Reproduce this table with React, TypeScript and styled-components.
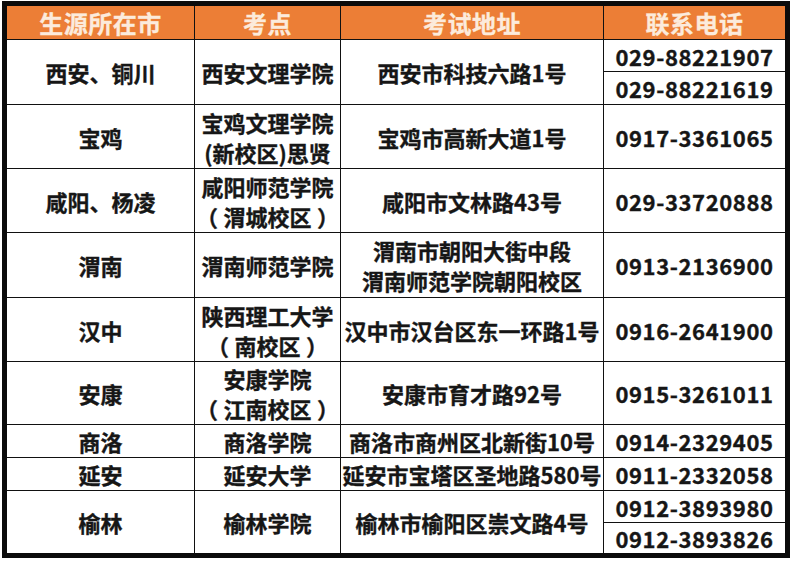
import styled, { createGlobalStyle } from 'styled-components';

const GlobalStyle = createGlobalStyle`
  html, body {
    margin: 0;
    padding: 0;
    background: #ffffff;
  }
  body {
    font-family: "Noto Sans CJK SC", "Noto Sans", sans-serif;
  }
`;

const Page = styled.div`
  width: 796px;
  height: 561px;
  padding: 1px 0 0 2px;
  box-sizing: border-box;
`;

const Table = styled.div`
  display: grid;
  width: 778px;
  grid-template-columns: 187px 145px 262px 181px;
  grid-template-rows: 33px 31px 32px 63px 63px 64px 63px 62px 32px 32px 31px 30px;
  gap: 1px;
  background: #111111;
  border: 5px solid #0b0b0b;
`;

const HeadCell = styled.div`
  display: flex;
  align-items: center;
  justify-content: center;
  background: #ec7e36;
  color: #fcebdc;
  font-size: 24px;
  font-weight: 700;
  letter-spacing: 0.5px;
  -webkit-text-stroke: 0.3px #fcebdc;
`;

const Cell = styled.div<{ $span: number; $phone?: boolean }>`
  grid-row: span ${({ $span }) => $span};
  display: flex;
  flex-direction: column;
  align-items: center;
  justify-content: center;
  background: #ffffff;
  color: #161616;
  font-size: 22px;
  font-weight: 700;
  line-height: 30px;
  white-space: pre;
  -webkit-text-stroke: 0.35px #161616;
  letter-spacing: ${({ $phone }) => ($phone ? '0.6px' : '0')};
`;

interface Site
{
  city: string;
  school: string[];
  address: string[];
  phones: string[];
}

const heads = ['生源所在市', '考点', '考试地址', '联系电话'];

// U+2005 spaces widen the full-width brackets the way the original font sets them
const sites: Site[] = [
  { city: '西安、铜川', school: ['西安文理学院'], address: ['西安市科技六路1号'], phones: ['029-88221907', '029-88221619'] },
  { city: '宝鸡', school: ['宝鸡文理学院', '(新校区)思贤'], address: ['宝鸡市高新大道1号'], phones: ['0917-3361065'] },
  { city: '咸阳、杨凌', school: ['咸阳师范学院', '（\u2005渭城校区\u2005）'], address: ['咸阳市文林路43号'], phones: ['029-33720888'] },
  { city: '渭南', school: ['渭南师范学院'], address: ['渭南市朝阳大街中段', '渭南师范学院朝阳校区'], phones: ['0913-2136900'] },
  { city: '汉中', school: ['陕西理工大学', '（\u2005南校区\u2005）'], address: ['汉中市汉台区东一环路1号'], phones: ['0916-2641900'] },
  { city: '安康', school: ['安康学院', '（\u2005江南校区\u2005）'], address: ['安康市育才路92号'], phones: ['0915-3261011'] },
  { city: '商洛', school: ['商洛学院'], address: ['商洛市商州区北新街10号'], phones: ['0914-2329405'] },
  { city: '延安', school: ['延安大学'], address: ['延安市宝塔区圣地路580号'], phones: ['0911-2332058'] },
  { city: '榆林', school: ['榆林学院'], address: ['榆林市榆阳区崇文路4号'], phones: ['0912-3893980', '0912-3893826'] },
];

function Lines({ items }: { items: string[] })
{
  return (
    <>
      {items.map((line) => (
        <span key={line}>{line}</span>
      ))}
    </>
  );
}

export default function App()
{
  return (
    <Page>
      <GlobalStyle />
      <Table>
        {heads.map((h) => (
          <HeadCell key={h}>{h}</HeadCell>
        ))}
        {sites.map((s) =>
        {
          const span = s.phones.length;
          return [
            <Cell key={`${s.city}-c`} $span={span}>{s.city}</Cell>,
            <Cell key={`${s.city}-s`} $span={span}><Lines items={s.school} /></Cell>,
            <Cell key={`${s.city}-a`} $span={span}><Lines items={s.address} /></Cell>,
            ...s.phones.map((p) => (
              <Cell key={p} $span={1} $phone>{p}</Cell>
            )),
          ];
        })}
      </Table>
    </Page>
  );
}
